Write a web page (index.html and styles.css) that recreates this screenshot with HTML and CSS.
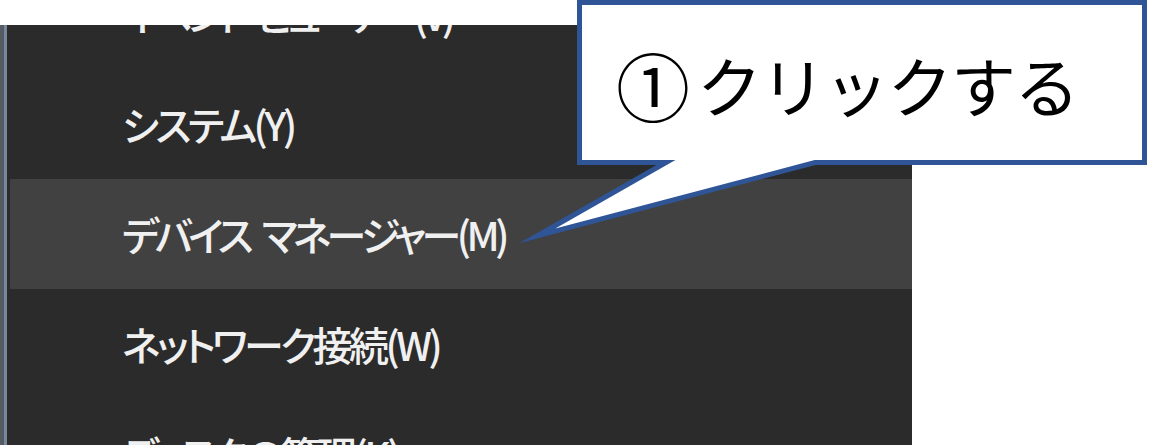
FILE: index.html
```html
<!DOCTYPE html>
<html lang="ja">
<head>
<meta charset="utf-8">
<link rel="stylesheet" href="styles.css">
</head>
<body>
<div class="page">
  <div class="topgap"></div>
  <div class="menu">
    <div class="edge"></div>
    <ul class="items">
      <li class="item tight">イベント ビューアー(V)</li>
      <li class="item">システム(Y)</li>
      <li class="item active">デバイス マネージャー(M)</li>
      <li class="item">ネットワーク接続(W)</li>
      <li class="item">ディスクの管理(K)</li>
    </ul>
  </div>
  <div class="callout">
    <svg class="callout-shape" width="1149" height="260" viewBox="0 0 1149 260">
      <path d="M579.5 2.5 H1144.5 V162.5 H815 L537 236 L666 162.5 H579.5 Z" fill="#ffffff" stroke="#2f5597" stroke-width="5" stroke-linejoin="miter" stroke-miterlimit="20"/>
    </svg>
    <div class="callout-text"><span class="num">①</span>クリックする</div>
  </div>
</div>
</body>
</html>
```

FILE: styles.css
```css
html, body {
  margin: 0;
  padding: 0;
  background: #ffffff;
}
.page {
  position: relative;
  width: 1149px;
  height: 445px;
  overflow: hidden;
  background: #ffffff;
}
.topgap {
  height: 25px;
}
.menu {
  display: flex;
  width: 912px;
  height: 420px;
  overflow: hidden;
  background: #2b2b2b;
}
.edge {
  flex: 0 0 7px;
  background: linear-gradient(to right, #5b5b5b 0, #5b5b5b 2px, #4b5b70 2px, #4b5b70 4px, #7a8796 4px, #7a8796 7px);
}
.items {
  flex: 1;
  list-style: none;
  margin: -66px 0 0 0;
  padding: 0 0 0 3px;
}
.item {
  height: 110px;
  display: flex;
  align-items: center;
  padding-left: 112px;
  font-family: "Noto Sans CJK JP", sans-serif;
  font-feature-settings: "palt" 1;
  font-size: 40px;
  font-weight: 500;
  letter-spacing: -3.5px;
  word-spacing: 8px;
  color: #f0f0f0;
  white-space: pre;
}
.item.tight {
  letter-spacing: -5px;
}
.item.active {
  background: #414141;
  letter-spacing: -4.5px;
}
.callout {
  position: absolute;
  left: 0;
  top: 0;
  width: 1149px;
  height: 260px;
}
.callout-shape {
  display: block;
}
.callout-text {
  position: absolute;
  left: 616px;
  top: 5px;
  height: 157px;
  display: flex;
  align-items: center;
  font-family: "Noto Sans CJK JP", sans-serif;
  font-size: 65px;
  letter-spacing: -1.5px;
  color: #000000;
  white-space: nowrap;
}
.num {
  font-size: 74px;
  letter-spacing: 0;
  margin-right: 7px;
}
```
